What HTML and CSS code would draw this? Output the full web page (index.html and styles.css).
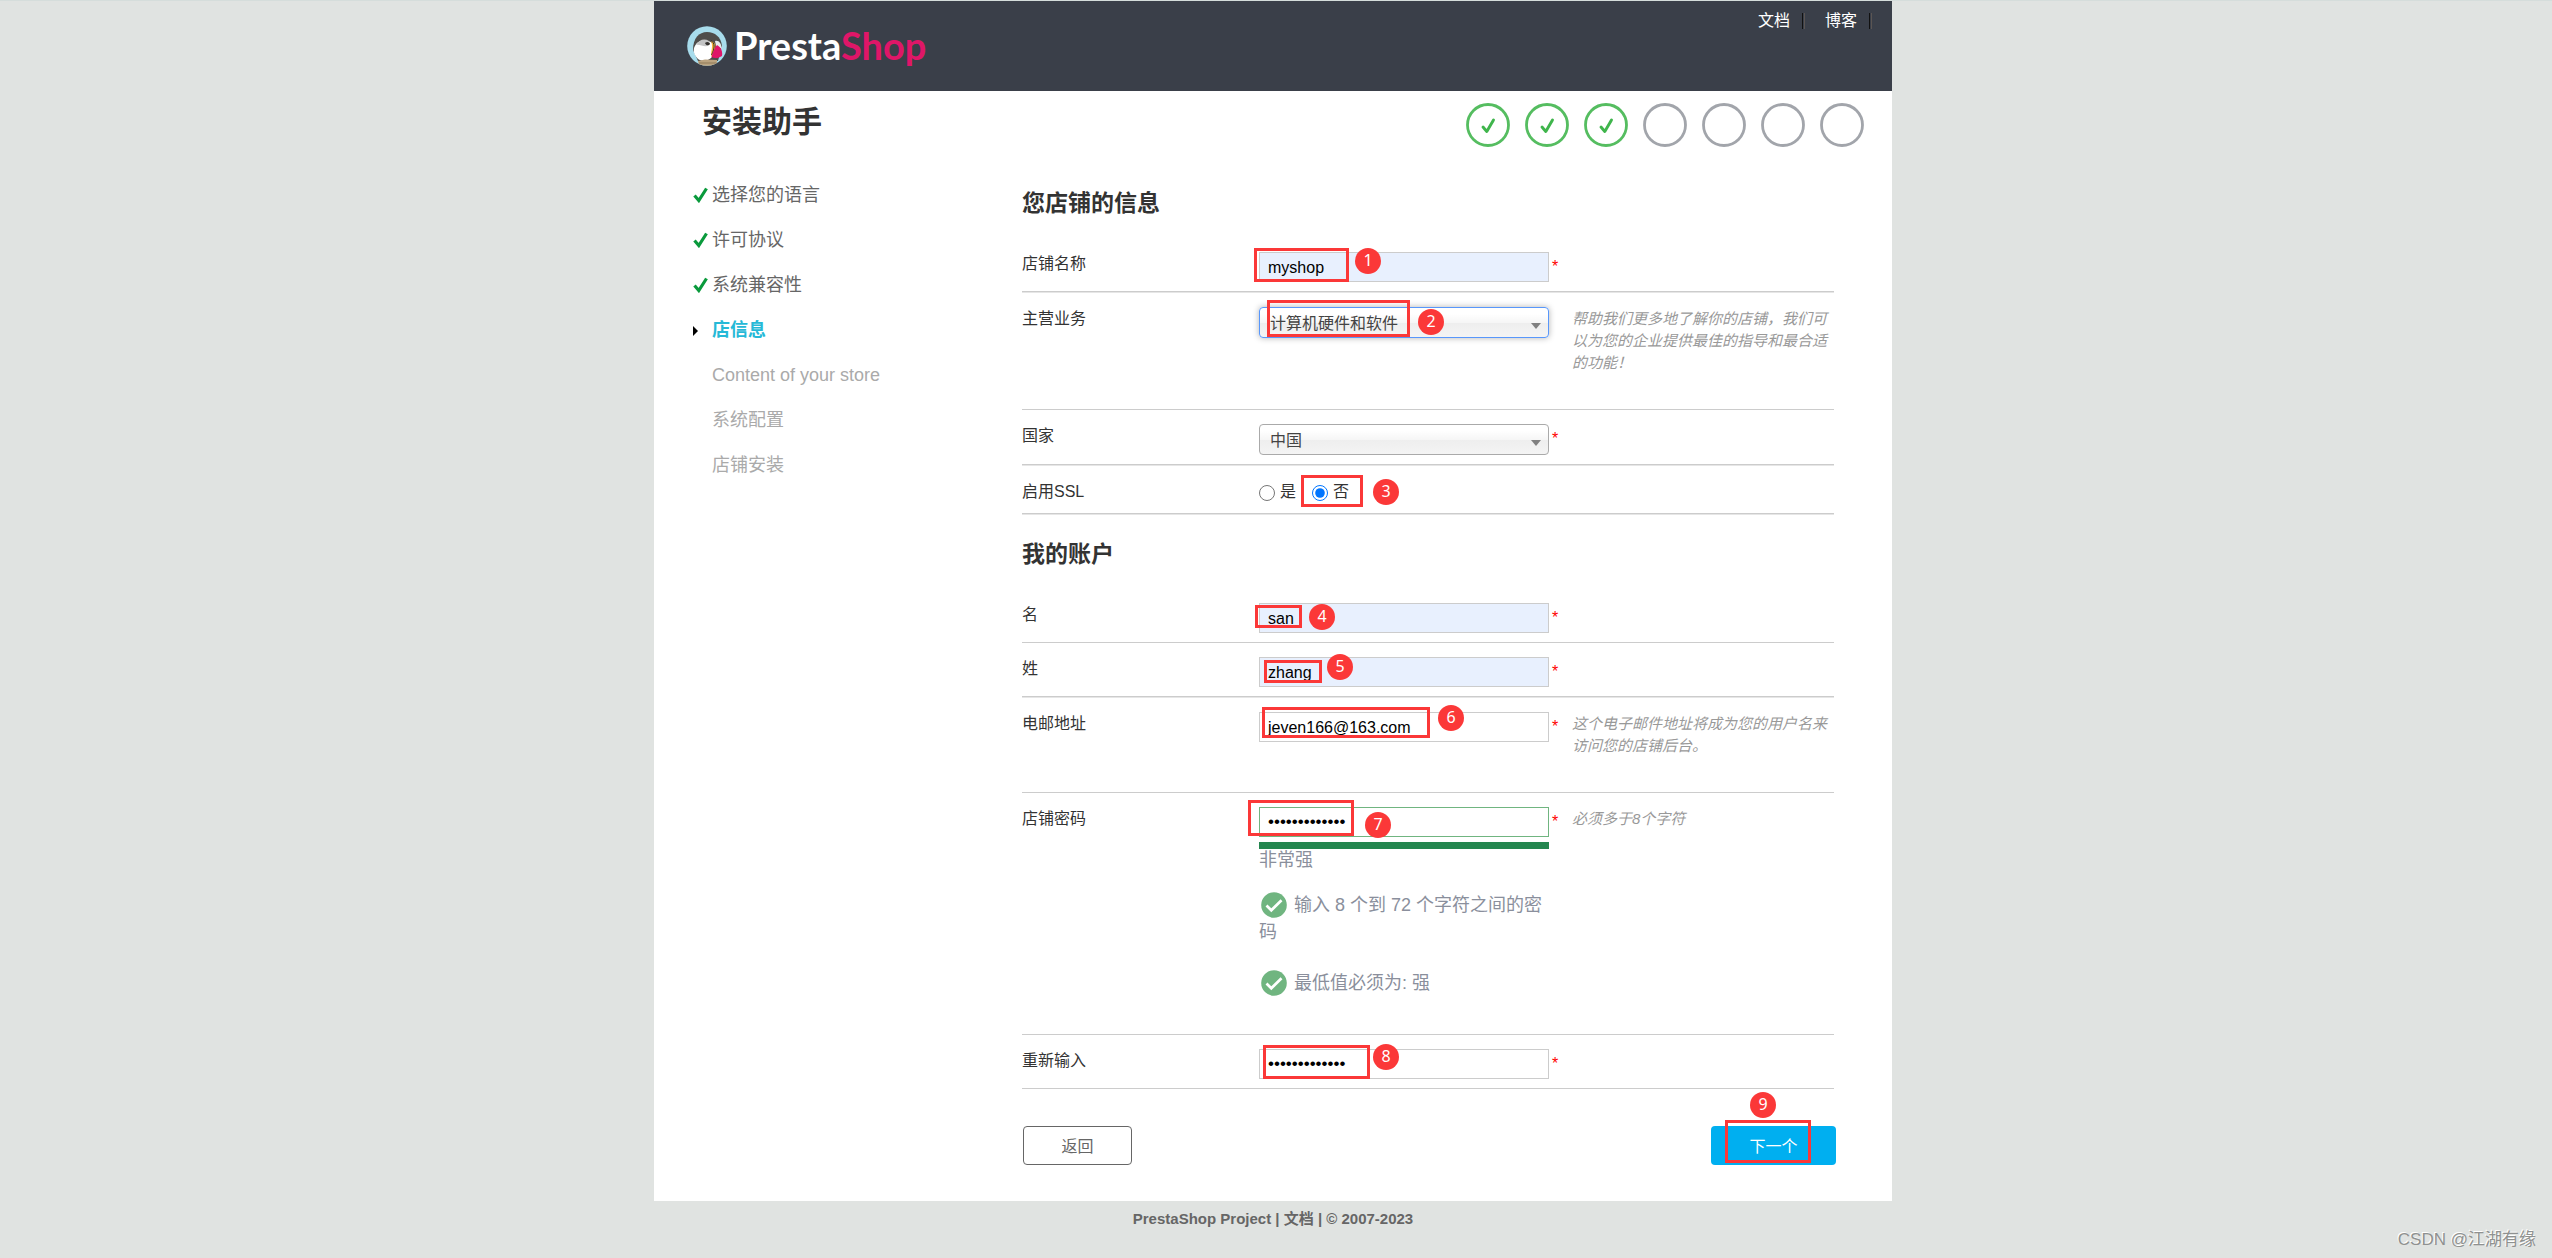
FILE: index.html
```html
<!DOCTYPE html>
<html lang="zh-CN">
<head>
<meta charset="utf-8">
<meta name="viewport" content="width=device-width, initial-scale=1">
<title>PrestaShop 安装助手</title>
<link rel="stylesheet" href="styles.css">
</head>
<body>
<svg class="defs" aria-hidden="true">
  <symbol id="tick" viewBox="0 0 15 16"><path d="M1.5 8.5 L5.8 13.5 L13.5 1.5" fill="none" stroke="#0a9a3c" stroke-width="3.2"/></symbol>
  <symbol id="step-done" viewBox="0 0 44 44"><circle cx="22" cy="22" r="20.5" fill="none" stroke="#55bd60" stroke-width="2.8"/><path d="M17 24 L20.8 28.5 L27.5 17" fill="none" stroke="#3fb54c" stroke-width="2.9" stroke-linecap="round" stroke-linejoin="round"/></symbol>
  <symbol id="step-todo" viewBox="0 0 44 44"><circle cx="22" cy="22" r="20.5" fill="none" stroke="#a2a5ab" stroke-width="2.8"/></symbol>
  <symbol id="rule-ok" viewBox="0 0 26 26"><circle cx="13" cy="13" r="12.8" fill="#70b580"/><path d="M5.5 13.5 L10.3 18.3 L20.5 8.2" fill="none" stroke="#fff" stroke-width="2.7"/></symbol>
</svg>
<div class="page">
  <header class="header">
    <a class="brand" href="#" aria-label="PrestaShop">
      <svg class="brand-icon" viewBox="0 0 40 40" aria-hidden="true">
        <clipPath id="disc"><circle cx="20" cy="20" r="19.8"/></clipPath>
        <g clip-path="url(#disc)">
          <rect width="40" height="40" fill="#a7dcec"/>
          <path d="M6 24 C6 12 12 6 20 6 C28 6 34 11 35 20 L31 35 L11 35Z" fill="#4e4d4b"/>
          <path d="M7 22 C9 16 14 13 20 15 C25 15 27 19 26 24 L25 31 C22 35 15 36 11 33 C8 30 6 26 7 22Z" fill="#fff"/>
          <path d="M9 19 C12 14 17 12 22 15 L20 20 C17 21 12 18 9 19Z" fill="#c3c4c5"/>
          <path d="M18 17 C20 15 23 16 23 18 C22 20 19 20 18 17Z" fill="#35322f"/>
          <path d="M28 15 C32 14 34 17 35 23 L29 20Z" fill="#e6ebed"/>
          <path d="M24 15 C28 16 29 19 28 23 L25 31 C22 28 27 22 24 15Z" fill="#f9b53b"/>
          <path d="M24 14.5 C28 17 28 22 24.5 29" fill="none" stroke="#35322f" stroke-width="1"/>
          <path d="M30 19 C34 21 36 26 35 30 C32 32 28 33 24.5 31 C26 27 27 22 30 19Z" fill="#df1668"/>
          <path d="M11 35 L18 33.5 L30 34 L30 40 L12 40Z" fill="#bba37f"/>
          <path d="M12 37 H29" stroke="#8f7a5a" stroke-width="1"/>
        </g>
      </svg>
      <span class="brand-name">Presta<span class="brand-accent">Shop</span></span>
    </a>
    <nav class="links"><a href="#">文档</a><a href="#">博客</a></nav>
  </header>
  <div class="titlebar">
    <h1>安装助手</h1>
    <div class="steps" role="img" aria-label="3 / 7">
      <svg><use href="#step-done"/></svg><svg><use href="#step-done"/></svg><svg><use href="#step-done"/></svg><svg><use href="#step-todo"/></svg><svg><use href="#step-todo"/></svg><svg><use href="#step-todo"/></svg><svg><use href="#step-todo"/></svg>
    </div>
  </div>
  <div class="columns">
    <ol class="sidebar">
      <li class="done"><svg><use href="#tick"/></svg><a href="#">选择您的语言</a></li>
      <li class="done"><svg><use href="#tick"/></svg><a href="#">许可协议</a></li>
      <li class="done"><svg><use href="#tick"/></svg><a href="#">系统兼容性</a></li>
      <li class="current">店信息</li>
      <li>Content of your store</li>
      <li>系统配置</li>
      <li>店铺安装</li>
    </ol>
    <form class="main">
      <h2>您店铺的信息</h2>
      <div class="row soft">
        <label for="shop">店铺名称</label>
        <input class="text filled" id="shop" type="text" value="myshop">
        <sup class="req">*</sup>
        <i class="box b1"></i><b class="badge n1">1</b>
      </div>
      <div class="row">
        <label for="activity">主营业务</label>
        <div class="select focused"><select id="activity"><option>计算机硬件和软件</option></select></div>
        <p class="hint">帮助我们更多地了解你的店铺，我们可以为您的企业提供最佳的指导和最合适的功能！</p>
        <i class="box b2"></i><b class="badge n2">2</b>
      </div>
      <div class="row soft">
        <label for="country">国家</label>
        <div class="select"><select id="country"><option>中国</option></select></div>
        <sup class="req">*</sup>
      </div>
      <div class="row soft radios-row">
        <span>启用SSL</span>
        <div class="radios">
          <label><input type="radio" name="ssl">是</label>
          <label><input type="radio" name="ssl" checked>否</label>
        </div>
        <i class="box b3"></i><b class="badge n3">3</b>
      </div>
      <h2 class="second">我的账户</h2>
      <div class="row">
        <label for="first">名</label>
        <input class="text filled" id="first" type="text" value="san">
        <sup class="req">*</sup>
        <i class="box b4"></i><b class="badge n4">4</b>
      </div>
      <div class="row soft">
        <label for="last">姓</label>
        <input class="text filled" id="last" type="text" value="zhang">
        <sup class="req">*</sup>
        <i class="box b5"></i><b class="badge n5">5</b>
      </div>
      <div class="row">
        <label for="email">电邮地址</label>
        <input class="text" id="email" type="text" value="jeven166@163.com">
        <sup class="req">*</sup>
        <p class="hint">这个电子邮件地址将成为您的用户名来访问您的店铺后台。</p>
        <i class="box b6"></i><b class="badge n6">6</b>
      </div>
      <div class="row">
        <label for="password">店铺密码</label>
        <div class="strength">
          <input class="text valid" id="password" type="password" value="abcdefghijklm">
          <div class="bar"></div>
          <p class="level">非常强</p>
          <p class="rule"><svg><use href="#rule-ok"/></svg>输入 8 个到 72 个字符之间的密码</p>
          <p class="rule"><svg><use href="#rule-ok"/></svg>最低值必须为: 强</p>
        </div>
        <sup class="req">*</sup>
        <p class="hint">必须多于8个字符</p>
        <i class="box b7"></i><b class="badge n7">7</b>
      </div>
      <div class="row">
        <label for="confirm">重新输入</label>
        <input class="text" id="confirm" type="password" value="abcdefghijklm">
        <sup class="req">*</sup>
        <i class="box b8"></i><b class="badge n8">8</b>
      </div>
      <div class="actions">
        <button class="back" type="button">返回</button>
        <div class="next-wrap">
          <button class="next" type="button">下一个</button>
          <i class="box b9"></i><b class="badge n9">9</b>
        </div>
      </div>
    </form>
  </div>
</div>
<footer class="footer"><a href="#">PrestaShop Project</a> | <a href="#">文档</a> | © 2007-2023</footer>
<div class="watermark">CSDN @江湖有缘</div>
</body>
</html>
```
FILE: styles.css
```css
* { box-sizing: border-box; }
body {
  margin: 0;
  padding-right: 6px;
  border-top: 1px solid #d5dddb;
  background: #e0e3e1;
  color: #333;
  font: 16px/22px "Liberation Sans", "Noto Sans CJK SC", sans-serif;
}
h1, h2, p, ol { margin: 0; padding: 0; }
a { color: inherit; text-decoration: none; }
.defs { display: none; }

.page { max-width: 1238px; margin: 0 auto; background: #fff; }

.header {
  display: flex;
  justify-content: space-between;
  align-items: flex-start;
  height: 90px;
  padding: 9px 20px 0 33px;
  background: #3a3f49;
  color: #fff;
}
.brand { display: flex; gap: 7px; padding-top: 16px; }
.brand-icon { width: 40px; height: 40px; }
.brand-name { font: bold 38px/38px Lato, sans-serif; }
.brand-accent { color: #df1668; }
.links { display: flex; gap: 20px; }
.links a { display: flex; align-items: center; gap: 12px; }
.links a::after {
  content: "";
  width: 3px;
  height: 16px;
  background: linear-gradient(90deg, #111 33%, #3a3f49 33% 66%, #5a5553 66%);
}

.titlebar {
  display: flex;
  justify-content: space-between;
  align-items: center;
  height: 68px;
  padding: 0 28px 0 48px;
}
h1 { padding-bottom: 6px; font-size: 30px; line-height: 36px; }
.steps { display: flex; gap: 15px; }
.steps svg { width: 44px; height: 44px; }

.columns { display: grid; grid-template-columns: 368px 1fr; }

.sidebar {
  padding: 14px 0 0 58px;
  list-style: none;
  color: #aaa;
  font-size: 18px;
  line-height: 45px;
}
.sidebar li { position: relative; height: 45px; }
.sidebar svg { position: absolute; left: -19px; top: 14px; width: 15px; height: 16px; }
.sidebar .done { color: #666; }
.sidebar .current { color: #25b9d7; font-weight: bold; }
.sidebar .current::before {
  content: "";
  position: absolute;
  left: -19px;
  top: 18px;
  border: 5px solid transparent;
  border-left-color: #000;
  border-right-width: 0;
}

.main { padding: 29px 58px 36px 0; }
h2 { padding-bottom: 20px; font-size: 23px; line-height: 30px; }
.second { padding-top: 24px; }

.row {
  position: relative;
  display: grid;
  grid-template-columns: 237px 290px 23px 1fr;
  align-items: start;
  padding: 14px 0 9px;
  border-bottom: 1px solid #ccc;
}
.row > label, .row > span { line-height: 24px; }
.soft { margin-bottom: 1px; box-shadow: 0 1px #e6e6e6; }

.text {
  width: 100%;
  height: 30px;
  padding: 1px 8px 0;
  border: 1px solid #ccc;
  background: #fff;
  color: #000;
  font: inherit;
}
.text[type="password"] { padding: 0 8px; font-size: 17px; }
.filled { background: #e8f0fe; }
.valid { border-color: #70b580; }

.select { position: relative; }
.select select {
  display: block;
  width: 100%;
  height: 31px;
  padding: 2px 10px 0;
  border: 1px solid #aaa;
  border-radius: 4px;
  appearance: none;
  background: linear-gradient(#fff 20%, #f6f6f6 50%, #eee 52%, #f4f4f4);
  color: #444;
  font: inherit;
}
.select::after {
  content: "";
  position: absolute;
  right: 8px;
  top: 16px;
  border: 5px solid transparent;
  border-top: 6px solid #808080;
  border-bottom-width: 0;
}
.focused select { border-color: #5897fb; box-shadow: 0 0 6px rgba(0, 0, 0, .3); }

.req { padding-left: 3px; color: #f00; font-size: 16px; line-height: 30px; }
.hint { grid-column: 4; padding: 1px 0 26px; color: #999; font-size: 15px; font-style: italic; line-height: 22px; }

.radios { display: flex; gap: 16px; }
.radios label { display: flex; align-items: center; gap: 5px; line-height: 24px; }
.radios input { width: 16px; height: 16px; margin: 1px 0 0; }

.strength { padding-bottom: 28px; color: #8a8f9c; font-size: 18px; }
.strength input { display: block; }
.bar { height: 7px; margin-top: 5px; background: #24864f; }
.rule { padding-top: 21px; line-height: 27px; }
.rule + .rule { padding-top: 24px; }
.rule svg { width: 26px; height: 26px; margin: -4px 7px -2px 2px; vertical-align: middle; }

.actions { display: flex; justify-content: space-between; margin: 37px -2px 0 1px; }
.next-wrap { position: relative; }
button { height: 39px; padding: 2px 0 0; border-radius: 4px; font: inherit; }
.back { width: 109px; border: 1px solid #666; background: #fff; color: #666; }
.next { display: block; width: 125px; border: 0; background: #00aff0; color: #fff; }

.footer { padding-top: 7px; text-align: center; color: #666; font-size: 15px; font-weight: bold; }
.watermark { position: absolute; right: 16px; bottom: 6px; color: #8f9190; font-size: 17px; line-height: 24px; text-shadow: -1px -1px #fff; }

/* Numbered walkthrough markers laid over the form */
.box, .badge { position: absolute; pointer-events: none; }
.box { border: 3px solid #fb3838; }
.badge {
  width: 26px;
  height: 26px;
  border-radius: 50%;
  background: #fb3838;
  color: #fff;
  font: 16px/24px "Noto Sans", sans-serif;
  text-align: center;
}
.b1 { left: 232px; top: 10px; width: 95px; height: 34px; }
.n1 { left: 333px; top: 10px; }
.b2 { left: 245px; top: 7px; width: 143px; height: 37px; }
.n2 { left: 396px; top: 16px; }
.b3 { left: 279px; top: 9px; width: 62px; height: 32px; }
.n3 { left: 351px; top: 13px; }
.b4 { left: 233px; top: 16px; width: 47px; height: 23px; }
.n4 { left: 287px; top: 15px; }
.b5 { left: 242px; top: 17px; width: 58px; height: 23px; }
.n5 { left: 305px; top: 11px; }
.b6 { left: 240px; top: 9px; width: 168px; height: 31px; }
.n6 { left: 416px; top: 7px; }
.b7 { left: 226px; top: 7px; width: 106px; height: 36px; }
.n7 { left: 343px; top: 19px; }
.b8 { left: 241px; top: 10px; width: 107px; height: 34px; }
.n8 { left: 351px; top: 9px; }
.b9 { left: 14px; top: -6px; width: 86px; height: 43px; }
.n9 { left: 39px; top: -34px; }
```
